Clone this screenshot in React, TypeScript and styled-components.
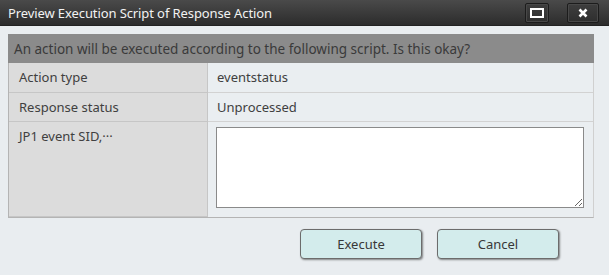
import React from "react";
import styled, { createGlobalStyle } from "styled-components";

const GlobalStyle = createGlobalStyle`
  html, body { margin: 0; padding: 0; background: #e9edf0; }
  body { font-family: "Noto Sans", "Liberation Sans", sans-serif; }
`;

const Dialog = styled.div`
  width: 609px;
  height: 275px;
  background: #e9edf0;
  display: flex;
  flex-direction: column;
  box-sizing: border-box;
`;

const TitleBar = styled.div`
  height: 26px;
  flex: none;
  display: flex;
  align-items: center;
  justify-content: space-between;
  padding: 0 10px 0 8px;
  background: linear-gradient(#4a4a4a, #2c2c2c);
  border-bottom: 1px solid #222;
  box-sizing: border-box;
`;

const Title = styled.div`
  color: #f2f2f2;
  font-size: 13px;
  letter-spacing: -0.1px;
`;

const WinButtons = styled.div`
  display: flex;
  gap: 18px;
`;

const WinButton = styled.button<{ $w: number }>`
  width: ${(p) => p.$w}px;
  height: 20px;
  padding: 0;
  display: flex;
  align-items: center;
  justify-content: center;
  background: linear-gradient(#3e3e3e, #2e2e2e);
  border: 1px solid #1c1c1c;
  border-radius: 2px;
  box-shadow: inset 0 0 0 1px #484848;
`;

const Content = styled.div`
  padding: 8px 15px 0 8px;
  display: flex;
  flex-direction: column;
`;

const MessageBar = styled.div`
  height: 29px;
  background: #8b8b8b;
  color: #3a3a3a;
  font-size: 13.5px;
  display: flex;
  align-items: center;
  padding-left: 6px;
`;

const Table = styled.div`
  display: grid;
  grid-template-columns: 199px 1fr;
  grid-template-rows: 30px 29px 95px;
  border-left: 1px solid #b4b4b4;
  border-bottom: 1px solid #b4b4b4;
  border-right: 1px solid #d0d0d0;
`;

const LabelCell = styled.div`
  background: #dcdcdc;
  color: #404040;
  font-size: 13px;
  padding: 5px 10px 0 10px;
  border-bottom: 1px solid #c6c6c6;
  border-right: 1px solid #c6c6c6;
  &:last-of-type { border-bottom: none; }
`;

const ValueCell = styled.div<{ $last?: boolean }>`
  background: #eaeef1;
  color: #404040;
  font-size: 13px;
  padding: ${(p) => (p.$last ? "5px 9px 9px 8px" : "5px 10px 0 9px")};
  border-bottom: ${(p) => (p.$last ? "none" : "1px solid #d2d2d2")};
  display: flex;
  box-sizing: border-box;
`;

const TextArea = styled.textarea`
  flex: 1;
  margin: 0;
  border: 1px solid #8a8a8a;
  background: #fff;
  resize: both;
  font-family: inherit;
  box-sizing: border-box;
`;

const ButtonRow = styled.div`
  display: flex;
  justify-content: flex-end;
  gap: 15px;
  margin-top: 11px;
  padding-right: 35px;
`;

const ActionButton = styled.button`
  width: 122px;
  height: 30px;
  background: #d3ecec;
  border: 1px solid #6c6c6c;
  border-radius: 4px;
  box-shadow: 1px 1px 2px rgba(0, 0, 0, 0.45);
  color: #383838;
  font-family: inherit;
  font-size: 13px;
`;

export default function App() {
  return (
    <>
      <GlobalStyle />
      <Dialog>
        <TitleBar>
          <Title>Preview Execution Script of Response Action</Title>
          <WinButtons>
            <WinButton $w={24} aria-label="Maximize">
              <svg width="14" height="10" viewBox="0 0 14 10">
                <rect x="1" y="1" width="12" height="8" fill="none" stroke="#fff" strokeWidth="2" />
              </svg>
            </WinButton>
            <WinButton $w={32} aria-label="Close">
              <svg width="10" height="10" viewBox="0 0 10 10">
                <path d="M1.5 1.5 L8.5 8.5 M8.5 1.5 L1.5 8.5" stroke="#fff" strokeWidth="2.6" />
              </svg>
            </WinButton>
          </WinButtons>
        </TitleBar>
        <Content>
          <MessageBar>An action will be executed according to the following script. Is this okay?</MessageBar>
          <Table>
            <LabelCell>Action type</LabelCell>
            <ValueCell>eventstatus</ValueCell>
            <LabelCell>Response status</LabelCell>
            <ValueCell>Unprocessed</ValueCell>
            <LabelCell>JP1 event SID,···</LabelCell>
            <ValueCell $last>
              <TextArea />
            </ValueCell>
          </Table>
          <ButtonRow>
            <ActionButton>Execute</ActionButton>
            <ActionButton>Cancel</ActionButton>
          </ButtonRow>
        </Content>
      </Dialog>
    </>
  );
}
